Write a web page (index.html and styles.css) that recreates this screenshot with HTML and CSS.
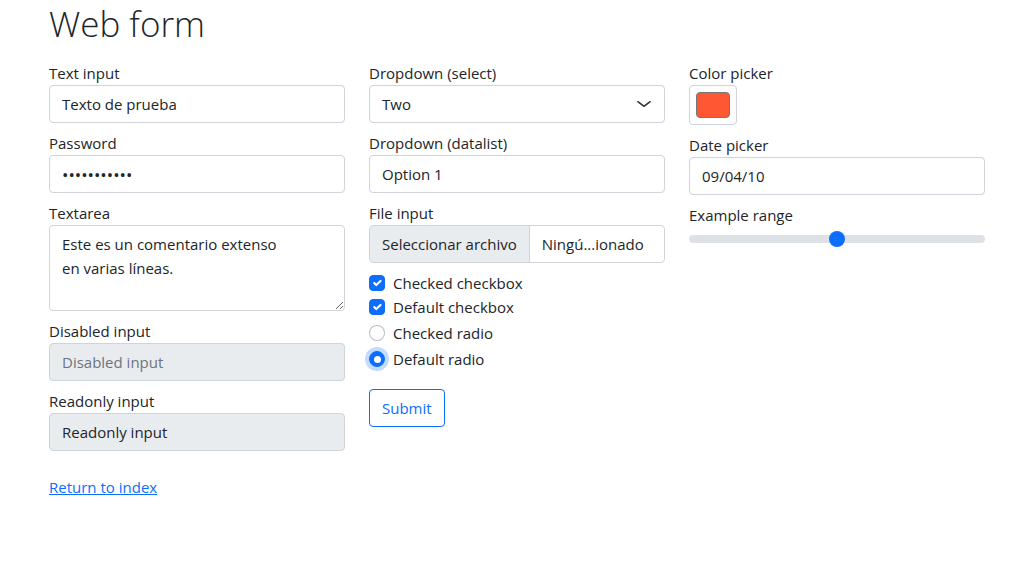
FILE: index.html
```html
<!DOCTYPE html>
<html lang="en">
<head>
<meta charset="utf-8">
<title>Web form</title>
<link rel="stylesheet" href="styles.css">
</head>
<body>
<div class="container">
  <h1 class="title">Web form</h1>
  <form class="grid">
    <div class="col">
      <label class="field">Text input
        <input class="control" type="text" value="Texto de prueba">
      </label>
      <label class="field">Password
        <input class="control pass" type="password" value="12345678901">
      </label>
      <label class="field">Textarea
        <textarea class="control area">Este es un comentario extenso
en varias líneas.</textarea>
      </label>
      <label class="field">Disabled input
        <input class="control grey" type="text" placeholder="Disabled input" disabled>
      </label>
      <label class="field">Readonly input
        <input class="control grey" type="text" value="Readonly input" readonly>
      </label>
    </div>
    <div class="col">
      <label class="field">Dropdown (select)
        <span class="control select"><span>Two</span>
          <svg width="16" height="12" viewBox="0 0 16 16" preserveAspectRatio="none"><path d="M2 5l6 6 6-6" fill="none" stroke="#343a40" stroke-width="2" stroke-linecap="round" stroke-linejoin="round"/></svg>
        </span>
      </label>
      <label class="field">Dropdown (datalist)
        <input class="control" type="text" value="Option 1">
      </label>
      <label class="field">File input
        <span class="control file"><span class="file-btn">Seleccionar archivo</span><span class="file-name">Ningú...ionado</span></span>
      </label>
      <div class="check-group">
        <div class="check-line"><span class="box checked"><svg width="16" height="16" viewBox="0 0 20 20"><path d="M6 10l3 3l6-6" fill="none" stroke="#fff" stroke-width="3" stroke-linecap="round" stroke-linejoin="round"/></svg></span>Checked checkbox</div>
        <div class="check-line"><span class="box checked"><svg width="16" height="16" viewBox="0 0 20 20"><path d="M6 10l3 3l6-6" fill="none" stroke="#fff" stroke-width="3" stroke-linecap="round" stroke-linejoin="round"/></svg></span>Default checkbox</div>
      </div>
      <div class="check-group">
        <div class="check-line"><span class="box radio"></span>Checked radio</div>
      </div>
      <div class="check-group">
        <div class="check-line"><span class="box radio on"><span class="dot"></span></span>Default radio</div>
      </div>
      <button type="button" class="btn">Submit</button>
    </div>
    <div class="col">
      <label class="field">Color picker
        <span class="color"><span class="swatch"></span></span>
      </label>
      <label class="field">Date picker
        <input class="control" type="text" value="09/04/10">
      </label>
      <label class="field">Example range
        <input class="range" type="range" min="0" max="10" value="5">
      </label>
    </div>
  </form>
  <div class="links"><a href="#">Return to index</a></div>
</div>
</body>
</html>
```

FILE: styles.css
```css
* { box-sizing: border-box; }
html, body { margin: 0; padding: 0; background: #fff; }
body {
  font-family: "Open Sans", "Noto Sans", sans-serif;
  font-size: 15px;
  line-height: 24px;
  color: #212529;
}
.container {
  max-width: 960px;
  margin: 0 auto;
  padding: 0 12px;
}
.title {
  margin: 0 0 5px;
  font-size: 35px;
  font-weight: 300;
  line-height: 48px;
}
.grid {
  display: grid;
  grid-template-columns: repeat(3, 1fr);
  column-gap: 24px;
  margin: 0;
}
.col { padding: 8px 0; }
.field {
  display: block;
  margin-bottom: 8px;
}
.control {
  display: block;
  width: 100%;
  height: 38px;
  margin: 0;
  padding: 6px 12px;
  font: inherit;
  line-height: 24px;
  color: #212529;
  background: #fff;
  border: 1px solid #ced4da;
  border-radius: 4px;
  outline: none;
}
.pass { font-size: 17px; }
.area { height: 86px; resize: vertical; }
.grey { background: #e9ecef; }
.grey::placeholder { color: #6c757d; opacity: 1; }
.select {
  display: flex;
  align-items: center;
  justify-content: space-between;
  padding-right: 12px;
}
.select svg { display: block; }
.file {
  display: flex;
  padding: 0;
  overflow: hidden;
}
.file-btn {
  padding: 6px 12px;
  background: #e9ecef;
  border-right: 1px solid #ced4da;
  white-space: nowrap;
}
.file-name {
  padding: 6px 12px;
  white-space: nowrap;
}
.check-group { margin-bottom: 2px; }
.check-line {
  display: flex;
  align-items: flex-start;
  height: 24px;
}
.box {
  flex: none;
  width: 16px;
  height: 16px;
  margin: 4px 8px 0 0;
  border: 1px solid rgba(0, 0, 0, 0.25);
  border-radius: 4px;
  background: #fff;
  display: flex;
  align-items: center;
  justify-content: center;
}
.box svg { display: block; }
.box.checked { background: #0d6efd; border-color: #0d6efd; }
.radio { border-radius: 50%; }
.radio.on {
  background: #0d6efd;
  border-color: #0d6efd;
  box-shadow: 0 0 0 4px rgba(13, 110, 253, 0.25);
}
.dot {
  width: 7px;
  height: 7px;
  border-radius: 50%;
  background: #fff;
}
.btn {
  margin-top: 16px;
  padding: 6px 12px;
  font: inherit;
  line-height: 24px;
  color: #0d6efd;
  background: #fff;
  border: 1px solid #0d6efd;
  border-radius: 4px;
}
.color {
  display: block;
  width: 48px;
  height: 40px;
  padding: 6px;
  border: 1px solid #ced4da;
  border-radius: 4px;
}
.swatch {
  display: block;
  width: 100%;
  height: 100%;
  background: #ff5733;
  border: 1px solid #777;
  border-radius: 4px;
}
.range {
  display: block;
  width: 100%;
  height: 24px;
  margin: 0;
  padding: 0;
  background: transparent;
  -webkit-appearance: none;
  appearance: none;
}
.range::-webkit-slider-runnable-track {
  height: 8px;
  background: #dee2e6;
  border-radius: 16px;
}
.range::-webkit-slider-thumb {
  -webkit-appearance: none;
  appearance: none;
  width: 16px;
  height: 16px;
  margin-top: -4px;
  border: 0;
  border-radius: 16px;
  background: #0d6efd;
}
.links { padding: 8px 0; }
.links a { color: #0d6efd; text-decoration: underline; }
```
